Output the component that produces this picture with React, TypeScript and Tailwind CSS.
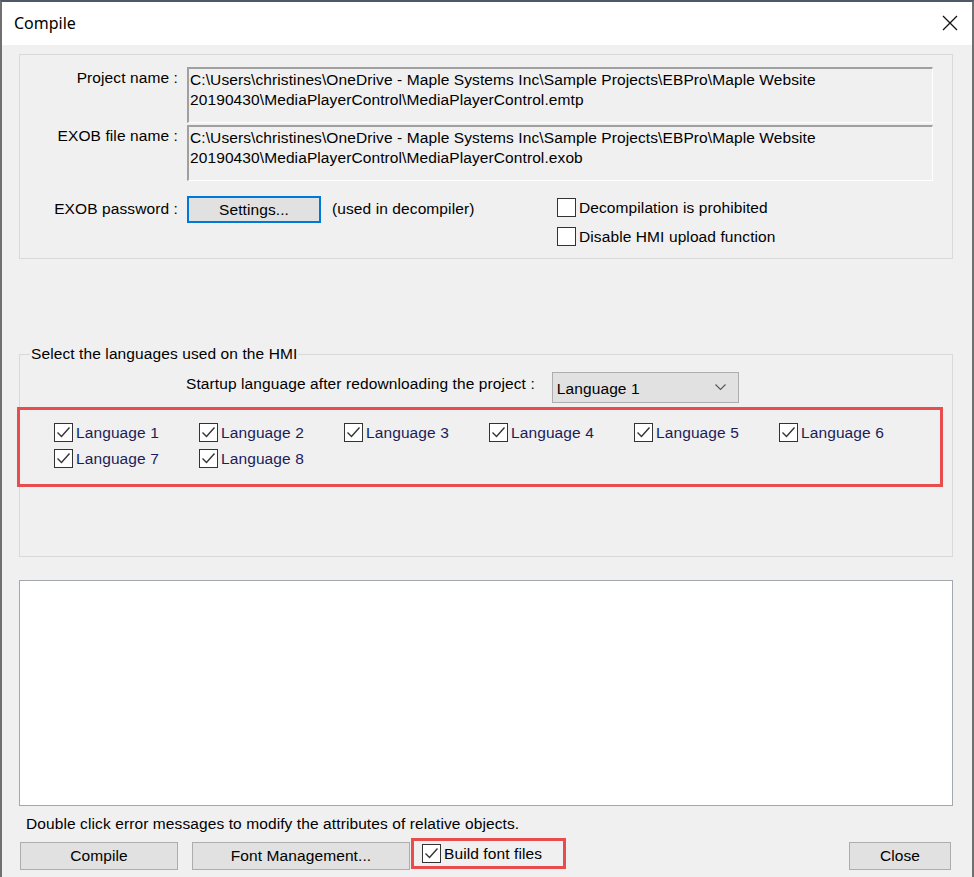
import React from "react";

const font = { fontFamily: '"Liberation Sans", Arial, sans-serif' };

function Check({ checked }: { checked: boolean }) {
  return (
    <span className="inline-flex w-[19px] h-[19px] border border-[#333333] bg-white shrink-0 items-center justify-center">
      {checked && (
        <svg width="17" height="17" viewBox="0 0 17 17">
          <path d="M2.5 8.5 L6.5 12.5 L14.5 3.5" fill="none" stroke="#333333" strokeWidth="1.4" />
        </svg>
      )}
    </span>
  );
}

function Field({ lines }: { lines: string[] }) {
  return (
    <div className="w-[746px] h-[56px] bg-[#f0f0f0] border-t-2 border-l-2 border-t-[#a0a0a0] border-l-[#a0a0a0] border-b border-r border-b-white border-r-white pl-[1px] pt-[1px] leading-[20px] text-black">
      {lines.map((l) => (
        <div key={l}>{l}</div>
      ))}
    </div>
  );
}

export default function App() {
  const langs = ["Language 1", "Language 2", "Language 3", "Language 4", "Language 5", "Language 6", "Language 7", "Language 8"];
  return (
    <div style={font} className="w-[974px] h-[877px] bg-[#f0f0f0] border-t-2 border-t-[#4f5866] border-l-2 border-l-[#707070] border-r-2 border-r-[#707070] flex flex-col overflow-hidden text-[15.5px] tracking-[0.1px] text-black">
      {/* title bar */}
      <div className="h-[43px] bg-white flex items-center justify-between pl-[12px] pr-[14px] shrink-0 tracking-normal">
        <span style={{ fontFamily: '"Noto Sans", "Open Sans", sans-serif' }} className="text-[16px] text-black mt-[-1px]">Compile</span>
        <svg width="16" height="16" viewBox="0 0 16 16" className="mt-[-1px]">
          <path d="M1 1 L15 15 M15 1 L1 15" stroke="#111" strokeWidth="1.3" />
        </svg>
      </div>

      <div className="flex flex-col pl-[17px]">
        {/* group 1 */}
        <div className="mt-[9px] w-[934px] h-[205px] border border-[#d9d9d9] flex flex-col pt-[12px]">
          <div className="flex items-start">
            <div className="w-[158px] text-right pt-[1px] leading-[20px]">Project name :</div>
            <div className="ml-[9px]">
              <Field lines={["C:\\Users\\christines\\OneDrive - Maple Systems Inc\\Sample Projects\\EBPro\\Maple Website", "20190430\\MediaPlayerControl\\MediaPlayerControl.emtp"]} />
            </div>
          </div>
          <div className="flex items-start mt-[2px]">
            <div className="w-[158px] text-right pt-[1px] leading-[20px]">EXOB file name :</div>
            <div className="ml-[9px]">
              <Field lines={["C:\\Users\\christines\\OneDrive - Maple Systems Inc\\Sample Projects\\EBPro\\Maple Website", "20190430\\MediaPlayerControl\\MediaPlayerControl.exob"]} />
            </div>
          </div>
          <div className="flex items-start mt-[15px]">
            <div className="w-[537px] flex items-start">
              <div className="w-[158px] text-right pt-[3px] leading-[20px]">EXOB password :</div>
              <button className="ml-[9px] w-[134px] h-[27px] bg-[#e1e1e1] border-2 border-[#0078d7] flex items-center justify-center leading-[20px]">Settings...</button>
              <span className="ml-[11px] pt-[3px] leading-[20px]">(used in decompiler)</span>
            </div>
            <div className="flex flex-col gap-[10px] pt-[2px]">
              <div className="flex items-center gap-[3px] leading-[19px]"><Check checked={false} /><span>Decompilation is prohibited</span></div>
              <div className="flex items-center gap-[3px] leading-[19px]"><Check checked={false} /><span>Disable HMI upload function</span></div>
            </div>
          </div>
        </div>

        {/* group 2 */}
        <div className="relative mt-[95px] w-[934px] h-[203px] border border-[#d9d9d9] flex flex-col">
          <span className="absolute left-[10px] top-[-10px] bg-[#f0f0f0] px-[1px] leading-[18px]">Select the languages used on the HMI</span>
          <div className="flex items-start pl-[166px] mt-[17px]">
            <span className="pt-[2px] leading-[20px]">Startup language after redownloading the project :</span>
            <div className="ml-[17px] w-[187px] h-[31px] bg-[#e1e1e1] border border-[#adadad] flex items-center justify-between pl-[4px] pr-[12px]">
              <span className="mt-[3px] leading-[20px]">Language 1</span>
              <svg width="11" height="7" viewBox="0 0 11 7">
                <path d="M0.5 0.5 L5.5 5.5 L10.5 0.5" fill="none" stroke="#555" strokeWidth="1.1" />
              </svg>
            </div>
          </div>
          <div className="ml-[-3px] mt-[4px] w-[926px] h-[80px] border-[3px] border-[#e84c4c] pl-[34px] pt-[13px]">
            <div className="grid grid-cols-[145px_145px_145px_145px_145px_145px] gap-y-[7px]">
              {langs.map((l) => (
                <div key={l} className="flex items-center gap-[3px] text-[#1c1c5a] leading-[19px]">
                  <Check checked={true} />
                  <span>{l}</span>
                </div>
              ))}
            </div>
          </div>
        </div>

        {/* output */}
        <div className="mt-[23px] w-[934px] h-[226px] bg-white border border-[#a3a8ae]" />

        <div className="mt-[8px] pl-[7px] leading-[20px]">Double click error messages to modify the attributes of relative objects.</div>

        <div className="flex items-start mt-[4px]">
          <button className="mt-[4px] ml-[1px] w-[158px] h-[28px] bg-[#e1e1e1] border border-[#adadad] flex items-center justify-center leading-[20px]">Compile</button>
          <button className="mt-[4px] ml-[14px] w-[218px] h-[28px] bg-[#e1e1e1] border border-[#adadad] flex items-center justify-center leading-[20px]">Font Management...</button>
          <div className="ml-[1px] w-[155px] h-[31px] border-[3px] border-[#e84c4c] flex items-center pl-[8px] gap-[3px] leading-[19px]">
            <Check checked={true} />
            <span>Build font files</span>
          </div>
          <button className="mt-[4px] ml-[283px] w-[102px] h-[28px] bg-[#e1e1e1] border border-[#adadad] flex items-center justify-center leading-[20px]">Close</button>
        </div>
      </div>
    </div>
  );
}
